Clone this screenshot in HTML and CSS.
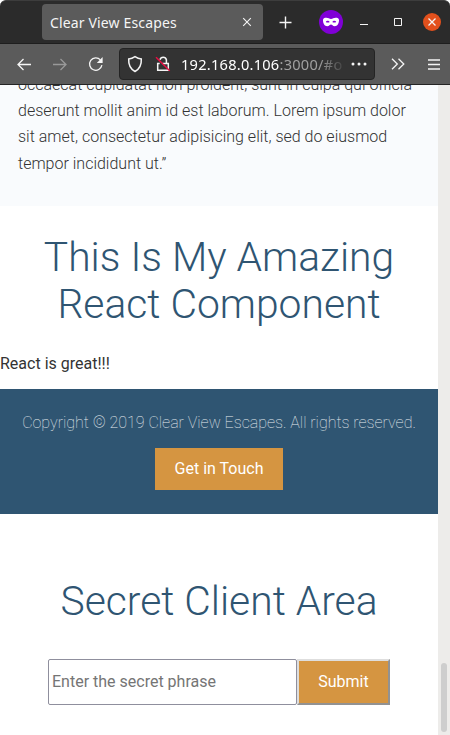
FILE: index.html
```html
<!DOCTYPE html>
<html lang="en">
<head>
<meta charset="utf-8">
<title>Clear View Escapes</title>
<link rel="stylesheet" href="styles.css">
</head>
<body>
<div class="window">
  <header class="tabbar">
    <div class="tab">
      <span class="tab-title">Clear View Escapes</span>
      <svg class="tab-close" width="10" height="10" viewBox="0 0 10 10"><path d="M1.200 1.200l7.600 7.600M8.800 1.200l-7.600 7.600"/></svg>
    </div>
    <svg class="new-tab" width="14" height="14" viewBox="0 0 14 14"><path d="M7.500 1.500v12M1.500 7.500h12"/></svg>
    <svg class="private" width="24" height="24" viewBox="0 0 24 24"><circle cx="12" cy="12" r="12"/><path fill-rule="evenodd" d="M4 10c0-1.700 1.500-2.300 3.300-2.300 2 0 3.200 1.200 4.700 1.200s2.700-1.200 4.700-1.200c1.800 0 3.300.6 3.300 2.300 0 3.600-1.700 6.200-4.200 6.200-2 0-2.800-1.700-3.800-1.700s-1.800 1.700-3.800 1.700C5.700 16.200 4 13.600 4 10zm2.800 1.700c.7 1 2.900 1.300 3.900.3-.9-1.700-2.900-1.800-3.900-.3zm6.500.3c1 1 3.200.7 3.900-.3-1-1.500-3-1.400-3.900.3z"/></svg>
    <svg class="minimize" width="8" height="8" viewBox="0 0 8 8"><path d="M0 6.500h8"/></svg>
    <svg class="maximize" width="8" height="8" viewBox="0 0 8 8"><path d="M.5.5h7v7h-7z"/></svg>
    <svg class="close" width="18" height="18" viewBox="0 0 18 18"><circle cx="9" cy="9" r="9"/><path d="M5.500 5.500l7 7M12.500 5.500l-7 7"/></svg>
  </header>
  <nav class="toolbar">
    <svg class="back" width="16" height="16" viewBox="0 0 16 16"><path d="M15 8.500H2M7.500 3L2 8.500 7.500 14"/></svg>
    <svg class="forward" width="16" height="16" viewBox="0 0 16 16"><path d="M1 8.500h13M8.500 3L14 8.500 8.500 14"/></svg>
    <svg class="reload" width="16" height="16" viewBox="0 0 16 16"><path d="M13.900 9.200a6.200 6.200 0 1 1-1.500-5.300"/><path class="solid" d="M14.600 1.100v5.800H8.800z"/></svg>
    <div class="urlbar">
      <svg class="shield" width="16" height="18" viewBox="0 0 16 18"><path d="M8 1.700c2 1.400 4.200 2.200 6.300 2.300.3 5.100-1.300 9.700-6.300 12.500C3 13.700 1.400 9.100 1.700 4 3.800 3.900 6 3.100 8 1.700z"/></svg>
      <svg class="lock" width="16" height="18" viewBox="0 0 16 18"><path d="M5 4.700a3.300 3.300 0 0 1 6.400 0V8M7.500 8.500h5.800v6.700H2.700V8.500h2"/><path class="slash" d="M1 2.300l13.700 13.500"/></svg>
      <span class="url"><span class="host">192.168.0.106</span>:3000/#o</span>
      <svg class="dots" width="16" height="4" viewBox="0 0 16 4"><circle cx="2" cy="2" r="1.500"/><circle cx="8" cy="2" r="1.500"/><circle cx="14" cy="2" r="1.500"/></svg>
    </div>
    <svg class="overflow" width="14" height="12" viewBox="0 0 14 12"><path d="M1 .8L6.300 6 1 11.200M7.500.8L12.800 6l-5.300 5.200"/></svg>
    <svg class="menu" width="12" height="11" viewBox="0 0 12 11"><path d="M0 1h12M0 5.500h12M0 10h12"/></svg>
  </nav>
  <div class="viewport">
    <div class="page">
      <section class="testimonial">
        <p>occaecat cupidatat non proident, sunt in culpa qui officia deserunt mollit anim id est laborum. Lorem ipsum dolor sit amet, consectetur adipisicing elit, sed do eiusmod tempor incididunt ut.”</p>
      </section>
      <section class="component">
        <h2>This Is My Amazing React Component</h2>
        <p>React is great!!!</p>
      </section>
      <footer class="footer">
        <p>Copyright © 2019 Clear View Escapes. All rights reserved.</p>
        <a class="btn">Get in Touch</a>
      </footer>
      <section class="client-area">
        <h2>Secret Client Area</h2>
        <form class="secret-form">
          <input type="text" placeholder="Enter the secret phrase">
          <button type="button">Submit</button>
        </form>
      </section>
    </div>
    <div class="scrollbar"><div class="thumb"></div></div>
  </div>
</div>
</body>
</html>
```
FILE: styles.css
```css
* { box-sizing: border-box; }
body { margin: 0; font-family: Roboto, sans-serif; font-size: 16px; color: #333; background: #fff; }
h2, p { margin: 0; }
svg { display: block; flex: none; fill: none; stroke: #f5f5f5; stroke-width: 1.3; }

.window { display: flex; flex-direction: column; height: 735px; overflow: hidden; }

.tabbar { display: flex; align-items: center; flex: none; height: 44px; padding-left: 42px; background: #2b2b2b; border-top: 1px solid #3d3d3d; border-bottom: 1px solid #1e1e1e; border-radius: 6px 6px 0 0; }
.tab { display: flex; align-items: center; justify-content: space-between; width: 221px; height: 36px; padding: 0 11px 0 8px; background: #5b5b5b; border-radius: 4px; }
.tab-title { font: 14px "Noto Sans", sans-serif; letter-spacing: 0.15px; color: #f5f5f5; white-space: nowrap; }
.tab-close { stroke-width: 1.1; }
.new-tab { margin-left: 15px; stroke-width: 1.4; }
.private { margin-left: 27px; fill: #fff; stroke: none; }
.private circle { fill: #8000d7; }
.minimize { margin-left: 17px; stroke-width: 1; }
.maximize { margin-left: 26px; stroke-width: 1; }
.close { margin-left: 21px; }
.close circle { fill: #e2501c; stroke: none; }

.toolbar { display: flex; align-items: center; flex: none; height: 41px; padding-left: 16px; background: #5b5b5b; border-bottom: 1px solid #242424; }
.forward { margin-left: 20px; stroke: #999; }
.reload { margin-left: 20px; }
.reload .solid { fill: #f5f5f5; stroke: none; }
.urlbar { display: flex; align-items: center; width: 256px; height: 32px; margin-left: 15px; padding-left: 7px; background: #333; border: 1px solid #242424; border-radius: 4px; }
.shield { stroke-width: 1.5; }
.lock { margin-left: 12px; stroke-width: 1.5; }
.lock .slash { stroke: #e80f43; }
.url { width: 164px; margin-left: 10px; overflow: hidden; font: 14.6px "Noto Sans", sans-serif; letter-spacing: 0.25px; color: #a0a0a0; white-space: nowrap; -webkit-mask-image: linear-gradient(to right, #000 138px, transparent 166px); mask-image: linear-gradient(to right, #000 138px, transparent 166px); }
.host { color: #fff; }
.dots { margin-left: 6px; fill: #f5f5f5; stroke: none; }
.overflow { margin-left: 16px; }
.menu { margin-left: 23px; }

.viewport { display: flex; flex: 1; min-height: 0; }
.page { display: flex; flex-direction: column; width: 438px; overflow: hidden; }
.scrollbar { display: flex; align-items: flex-end; width: 12px; padding: 0 3px 3px; background: #edecea; }
.thumb { width: 6px; height: 69px; background: #cecece; border-radius: 3px; }

.testimonial { flex: none; height: 121px; overflow: hidden; padding: 0 18px; background: #f9fbfd; }
.testimonial p { margin-top: -13.4px; font-weight: 300; line-height: 26.4px; }

h2 { font-size: 40.8px; font-weight: 300; line-height: 47px; color: #2f5572; text-align: center; }
.component { flex: none; height: 183px; padding-top: 28px; }
.component h2 { padding: 0 40px; }
.component p { margin-top: 23px; line-height: 26px; }

.footer { display: flex; flex-direction: column; align-items: center; flex: none; height: 125px; padding-top: 21px; background: #2f5572; }
.footer p { font-weight: 100; line-height: 26px; color: #e6ebef; }
.btn { margin-top: 12px; padding: 0 19.5px; line-height: 42px; color: #fff; background: #d59541; }

.client-area { padding-top: 64px; }
.secret-form { display: flex; height: 46px; margin: 34px 48px 0; }
input { width: 249px; padding: 0 3px 2px; font: 16px Roboto, sans-serif; background: #fff; border: 1px solid #8f8f9d; border-radius: 2px; }
input::placeholder { color: #757575; }
button { width: 93px; padding: 0 0 1px; font: 16px Roboto, sans-serif; color: #fff; background: #d59541; border: 2px solid; border-color: #dedede #929292 #929292 #dedede; }
```
